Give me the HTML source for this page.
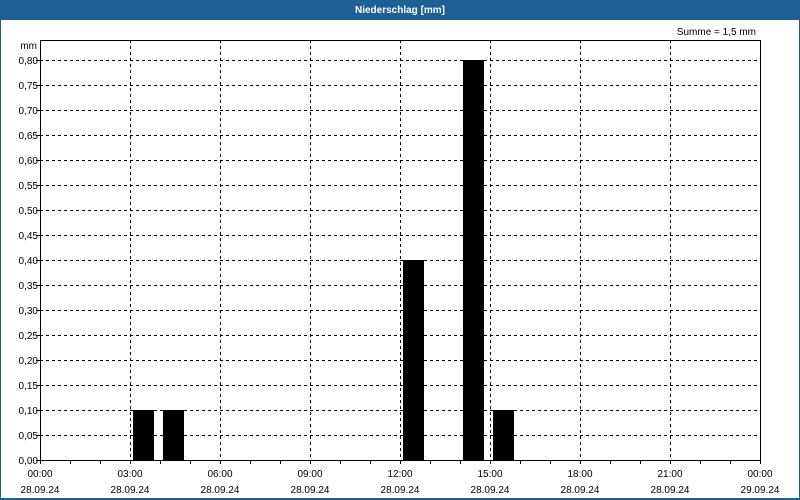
<!DOCTYPE html>
<html><head><meta charset="utf-8"><style>
html,body{margin:0;padding:0;background:#fff}
svg{display:block}
text{font-family:"Liberation Sans",sans-serif;font-size:10px;fill:#000}
</style></head><body>
<svg width="800" height="500" viewBox="0 0 800 500" xmlns="http://www.w3.org/2000/svg">
<rect x="0" y="0" width="800" height="500" fill="#1c6096"/>
<rect x="1" y="20" width="798" height="478" fill="#fff"/>
<text x="400" y="13" text-anchor="middle" style="fill:#fff;font-weight:bold;font-size:10px">Niederschlag [mm]</text>
<text x="756" y="35" text-anchor="end">Summe = 1,5 mm</text>
<text x="37" y="49" text-anchor="end">mm</text>
<g stroke="#000" stroke-width="1" stroke-dasharray="3,3" fill="none" shape-rendering="crispEdges">
<path d="M40 60.5H760M40 85.5H760M40 110.5H760M40 135.5H760M40 160.5H760M40 185.5H760M40 210.5H760M40 235.5H760M40 260.5H760M40 285.5H760M40 310.5H760M40 335.5H760M40 360.5H760M40 385.5H760M40 410.5H760M40 435.5H760"/>
<path d="M130.5 40V460M220.5 40V460M310.5 40V460M400.5 40V460M490.5 40V460M580.5 40V460M670.5 40V460"/>
</g>
<g fill="#000" shape-rendering="crispEdges">
<rect x="133" y="410" width="21" height="50"/>
<rect x="163" y="410" width="21" height="50"/>
<rect x="403" y="260" width="21" height="200"/>
<rect x="463" y="60" width="21" height="400"/>
<rect x="493" y="410" width="21" height="50"/>
</g>
<rect x="40.5" y="40.5" width="720" height="420" fill="none" stroke="#000" shape-rendering="crispEdges"/>
<g stroke="#000" shape-rendering="crispEdges">
<path d="M40.5 460V464M70.5 460V464M100.5 460V464M130.5 460V464M160.5 460V464M190.5 460V464M220.5 460V464M250.5 460V464M280.5 460V464M310.5 460V464M340.5 460V464M370.5 460V464M400.5 460V464M430.5 460V464M460.5 460V464M490.5 460V464M520.5 460V464M550.5 460V464M580.5 460V464M610.5 460V464M640.5 460V464M670.5 460V464M700.5 460V464M730.5 460V464M760.5 460V464"/>
<path d="M36 60.5H40M36 85.5H40M36 110.5H40M36 135.5H40M36 160.5H40M36 185.5H40M36 210.5H40M36 235.5H40M36 260.5H40M36 285.5H40M36 310.5H40M36 335.5H40M36 360.5H40M36 385.5H40M36 410.5H40M36 435.5H40M36 460.5H40"/>
</g>
<g text-anchor="end">
<text x="38" y="64">0,80</text><text x="38" y="89">0,75</text><text x="38" y="114">0,70</text><text x="38" y="139">0,65</text>
<text x="38" y="164">0,60</text><text x="38" y="189">0,55</text><text x="38" y="214">0,50</text><text x="38" y="239">0,45</text>
<text x="38" y="264">0,40</text><text x="38" y="289">0,35</text><text x="38" y="314">0,30</text><text x="38" y="339">0,25</text>
<text x="38" y="364">0,20</text><text x="38" y="389">0,15</text><text x="38" y="414">0,10</text><text x="38" y="439">0,05</text>
<text x="38" y="464">0,00</text>
</g>
<g text-anchor="middle">
<text x="40" y="477">00:00</text><text x="130" y="477">03:00</text><text x="220" y="477">06:00</text><text x="310" y="477">09:00</text><text x="400" y="477">12:00</text><text x="490" y="477">15:00</text><text x="580" y="477">18:00</text><text x="670" y="477">21:00</text><text x="760" y="477">00:00</text>
<text x="40" y="493">28.09.24</text><text x="130" y="493">28.09.24</text><text x="220" y="493">28.09.24</text><text x="310" y="493">28.09.24</text><text x="400" y="493">28.09.24</text><text x="490" y="493">28.09.24</text><text x="580" y="493">28.09.24</text><text x="670" y="493">28.09.24</text><text x="760" y="493">29.09.24</text>
</g>
</svg>
</body></html>
